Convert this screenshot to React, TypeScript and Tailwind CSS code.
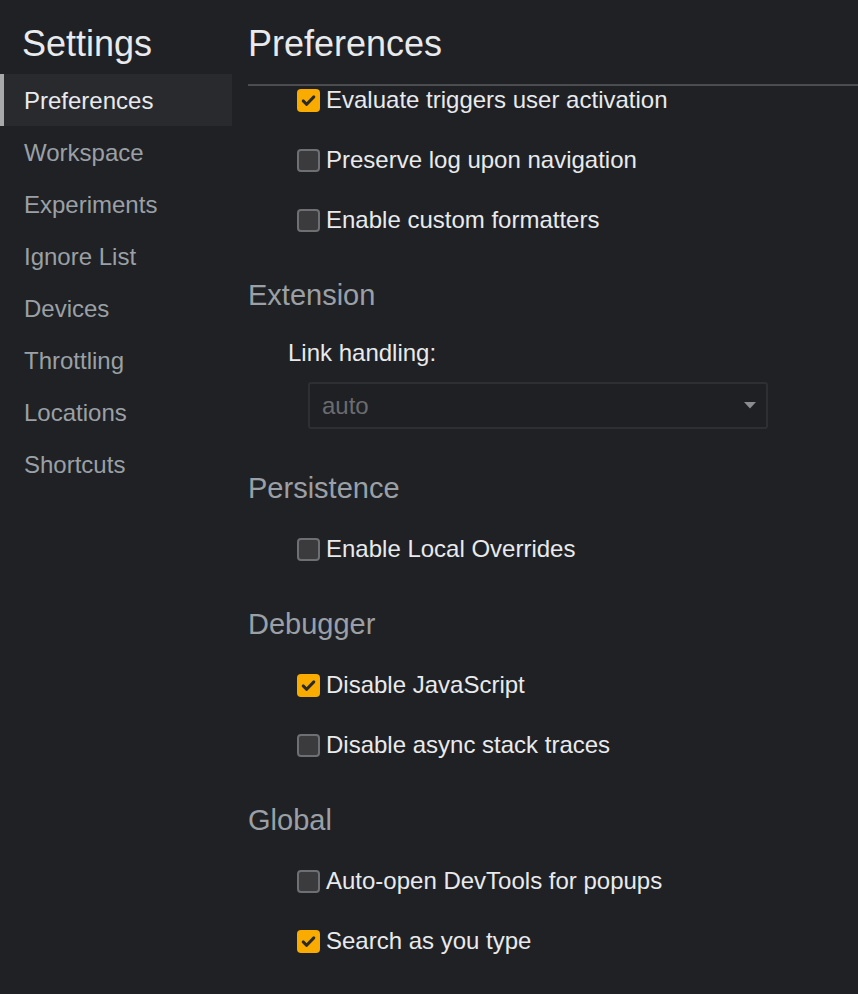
import React from 'react';

const sidebarItems = [
  'Preferences',
  'Workspace',
  'Experiments',
  'Ignore List',
  'Devices',
  'Throttling',
  'Locations',
  'Shortcuts',
];

function Checkbox({ checked }: { checked: boolean }) {
  if (checked) {
    return (
      <span className="w-[23px] h-[23px] rounded-[4px] bg-[#f9ab00] flex items-center justify-center shrink-0">
        <svg width="17" height="17" viewBox="0 0 16 16">
          <path d="M3 8.4 L6.3 11.6 L13 4.6" fill="none" stroke="#2a2a2a" strokeWidth="2.8" strokeLinecap="round" strokeLinejoin="round" />
        </svg>
      </span>
    );
  }
  return <span className="w-[23px] h-[23px] rounded-[4px] bg-[#3b3b3d] border-2 border-[#6d6f73] shrink-0" />;
}

function Row({ label, checked, first }: { label: string; checked: boolean; first?: boolean }) {
  return (
    <div className={first ? 'h-[44px] pb-[16px] flex items-center pl-[49px] gap-[6px]' : 'h-[60px] flex items-center pl-[49px] gap-[6px]'}>
      <Checkbox checked={checked} />
      <span className="text-[24px] text-[#e8eaed] leading-none">{label}</span>
    </div>
  );
}

function Heading({ title }: { title: string }) {
  return <div className="h-[32px] flex items-center text-[29px] text-[#9aa0a6]">{title}</div>;
}

export default function App() {
  return (
    <div className="w-[858px] h-[994px] bg-[#202124] flex overflow-hidden" style={{ fontFamily: '"Liberation Sans", Arial, sans-serif' }}>
      {/* Sidebar */}
      <div className="w-[232px] shrink-0 flex flex-col">
        <div className="h-[74px] flex items-center pl-[22px] pt-[14px] text-[36px] text-[#e8eaed]">Settings</div>
        {sidebarItems.map((item, i) => (
          <div
            key={item}
            className={
              i === 0
                ? 'h-[52px] flex items-center pl-[20px] pt-[1px] text-[24px] text-[#e8eaed] bg-[#292a2d] border-l-4 border-[#a8a9ab]'
                : 'h-[52px] flex items-center pl-[24px] pt-[2px] text-[24px] text-[#9aa0a6]'
            }
          >
            {item}
          </div>
        ))}
      </div>

      {/* Content */}
      <div className="flex-1 flex flex-col pl-[16px]">
        <div className="h-[86px] flex items-center pt-[4px] text-[36px] text-[#e8eaed] border-b-2 border-[#4a4c50]">
          Preferences
        </div>
        <Row label="Evaluate triggers user activation" checked first />
        <Row label="Preserve log upon navigation" checked={false} />
        <Row label="Enable custom formatters" checked={false} />

        <div className="mt-[30px]">
          <Heading title="Extension" />
        </div>
        <div className="mt-[26px] pl-[40px] text-[24px] text-[#e8eaed] leading-[30px]">Link handling:</div>
        <div className="mt-[14px] ml-[60px] w-[460px] h-[47px] border-2 border-[#2e2f32] rounded-[3px] bg-[#1f2023] flex items-center justify-between pl-[12px] pr-[10px]">
          <span className="text-[24px] text-[#6a6c70]">auto</span>
          <svg width="12" height="7" viewBox="0 0 12 7">
            <path d="M0 0 L12 0 L6 6.5 Z" fill="#8a8c90" />
          </svg>
        </div>

        <div className="mt-[44px]">
          <Heading title="Persistence" />
        </div>
        <div className="mt-[14px]">
          <Row label="Enable Local Overrides" checked={false} />
        </div>

        <div className="mt-[30px]">
          <Heading title="Debugger" />
        </div>
        <div className="mt-[14px]">
          <Row label="Disable JavaScript" checked />
          <Row label="Disable async stack traces" checked={false} />
        </div>

        <div className="mt-[30px]">
          <Heading title="Global" />
        </div>
        <div className="mt-[14px]">
          <Row label="Auto-open DevTools for popups" checked={false} />
          <Row label="Search as you type" checked />
        </div>
      </div>
    </div>
  );
}
